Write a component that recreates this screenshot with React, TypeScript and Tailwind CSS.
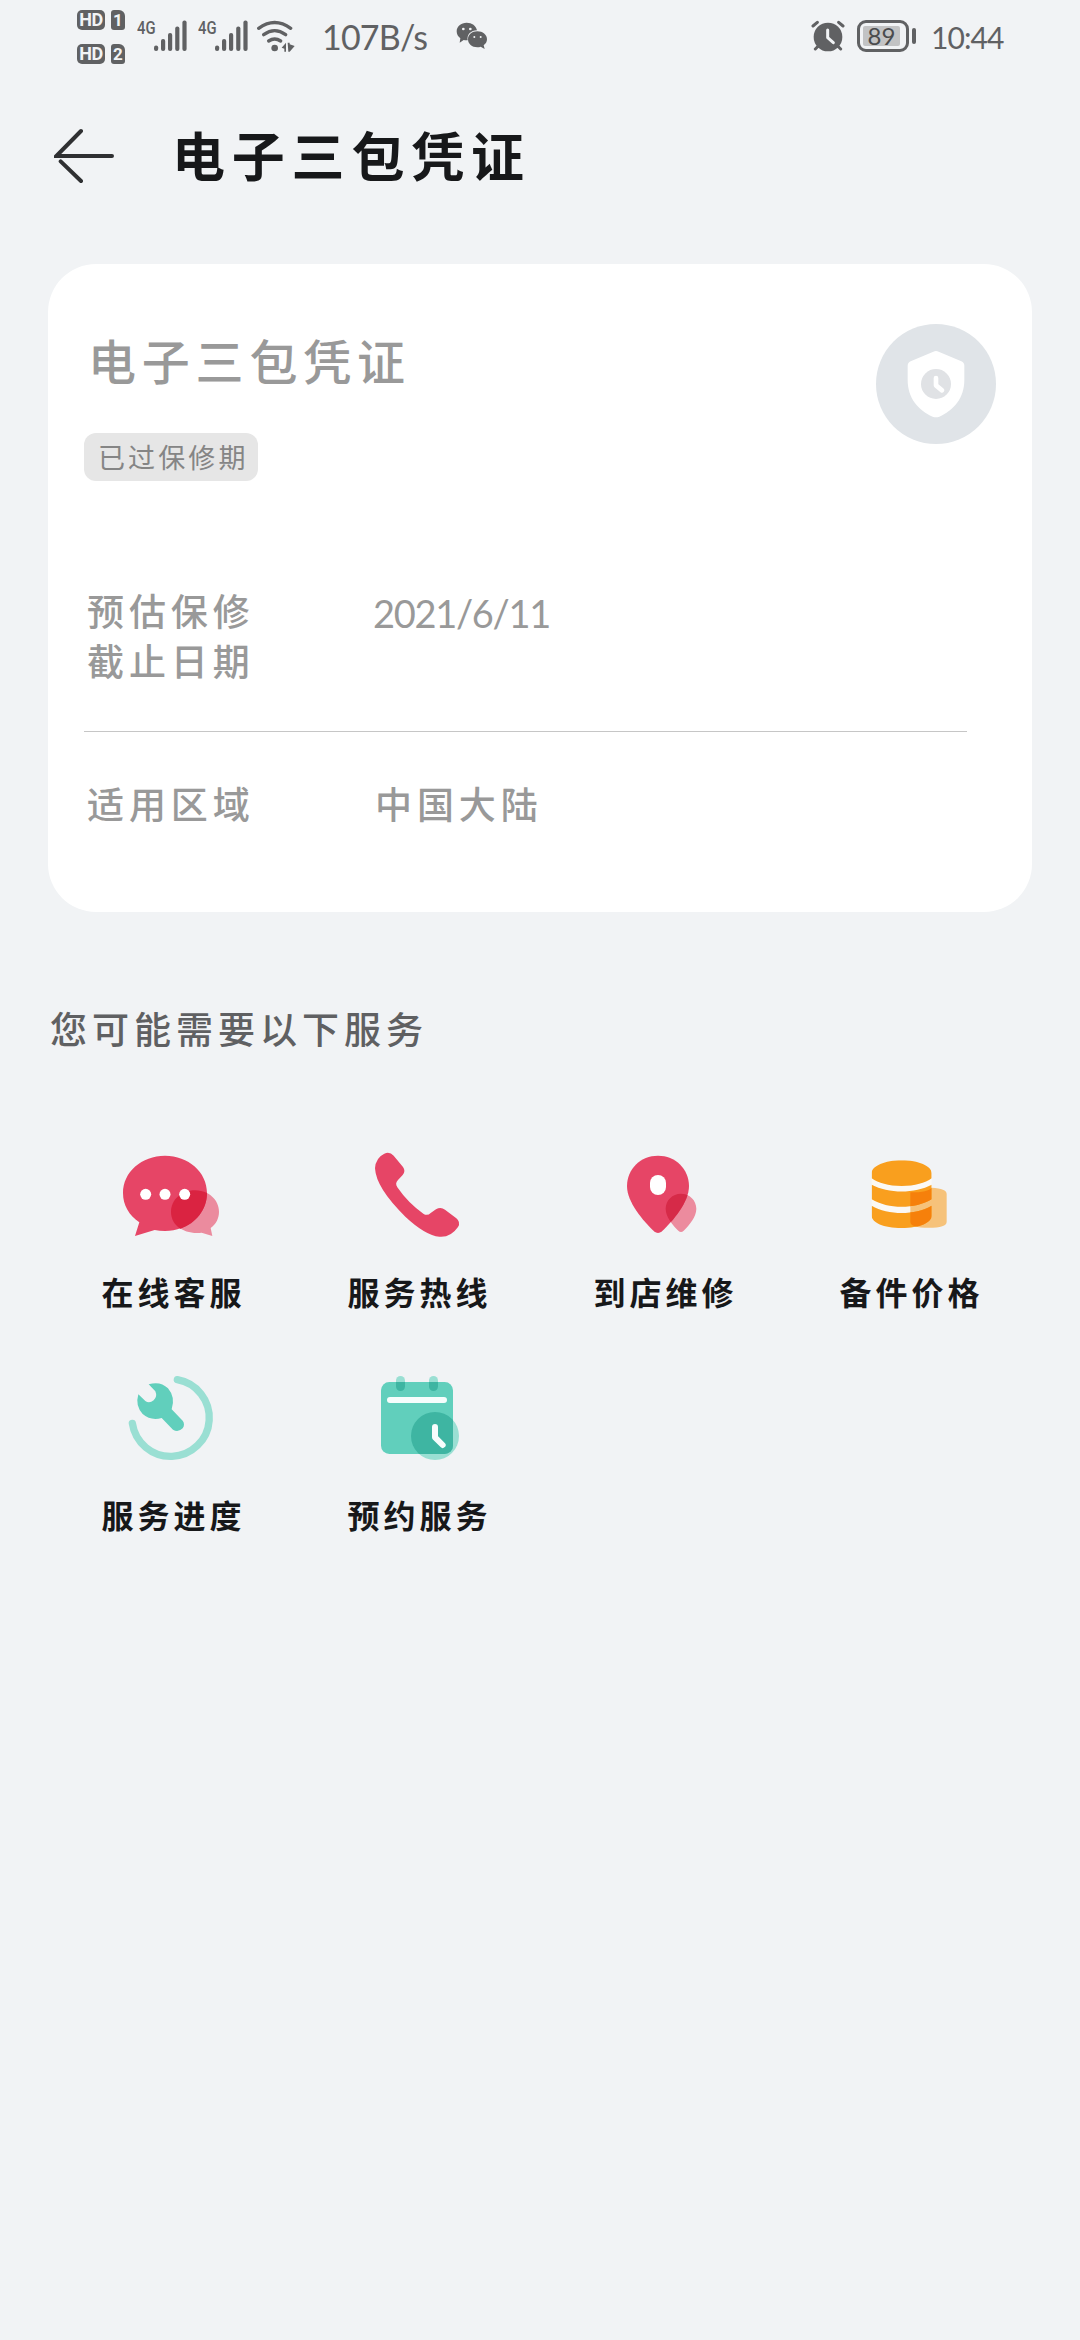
import type { ReactNode } from "react";

function SimBadge({ slot }: { slot: string }) {
  return (
    <div className="flex gap-1.5 text-[#f1f3f5] font-bold leading-none">
      <span className="flex h-5 w-7 items-center justify-center rounded-[5px] bg-[#606163] font-['Roboto',sans-serif] text-[18px] tracking-[-0.5px]">
        HD
      </span>
      <span className="flex h-5 w-3.5 items-center justify-center rounded-[3px] rounded-tr-[6px] bg-[#606163] font-['Roboto',sans-serif] text-[17px]">
        {slot}
      </span>
    </div>
  );
}

function Signal() {
  return (
    <div className="flex h-8 items-start">
      <span className="w-[17px] origin-left scale-x-[0.78] font-['Roboto',sans-serif] text-[19px] leading-4 font-medium">
        4G
      </span>
      <svg width="33" height="32" viewBox="0 0 33 32" fill="currentColor">
        <rect x="0" y="25.5" width="4.2" height="5.5" rx="2" />
        <rect x="7" y="19" width="4.2" height="12" rx="2" />
        <rect x="14" y="13" width="4.2" height="18" rx="2" />
        <rect x="21.2" y="6.5" width="4.2" height="24.5" rx="2" />
        <rect x="28.4" y="0.5" width="4.2" height="30.5" rx="2" />
      </svg>
    </div>
  );
}

function WifiIcon() {
  return (
    <svg width="38" height="32" viewBox="592 60 114 96" fill="none">
      <g stroke="currentColor" strokeWidth="10" strokeLinecap="round">
        <path d="M597 85Q645 50 693 85" />
        <path d="M612 104Q645 80 678 104" />
        <path d="M627 123Q645 111 663 123" />
      </g>
      <circle cx="645" cy="144" r="10" fill="currentColor" />
      <path d="M666 143L679 128V155H674V146ZM684 128L690 128V133L705 138L690 155H686Z" fill="currentColor" />
    </svg>
  );
}

function WechatIcon() {
  return (
    <svg width="32" height="28" viewBox="1186 67 96 84" fill="currentColor">
      <path d="M1218 69c-17 0-30 11-30 26 0 9 4 16 11 21l-2 13 12-8c3 1 6 1 9 1h3c-3-17 10-30 28-30-3-14-15-23-31-23z" />
      <path d="M1250 95c-16 0-28 10-28 24s12 24 28 24c4 0 7-1 10-2l12 7-3-11c6-4 10-11 10-18 0-14-13-24-29-24z" />
      <g fill="#f1f3f5">
        <circle cx="1208" cy="88" r="4" />
        <circle cx="1229" cy="88" r="4" />
        <circle cx="1241" cy="112" r="3" />
        <circle cx="1260" cy="112" r="3" />
      </g>
    </svg>
  );
}

function AlarmIcon() {
  return (
    <svg width="34" height="32" viewBox="90 60 102 96" fill="none">
      <g stroke="currentColor" strokeWidth="9" strokeLinecap="round">
        <path d="M96 78L109 67M186 78L173 67M112 138L103 147M170 138L179 147" />
      </g>
      <circle cx="141" cy="111" r="43" fill="currentColor" />
      <path d="M140 90V113L157 128" stroke="#f1f3f5" strokeWidth="9" strokeLinecap="round" strokeLinejoin="round" />
    </svg>
  );
}

function StatusBar() {
  return (
    <div className="flex h-[72px] items-start justify-between pr-[77px] pl-[77px] text-[#606163]">
      <div className="flex">
        <div className="flex w-[60px] flex-col gap-3.5 pt-2.5">
          <SimBadge slot="1" />
          <SimBadge slot="2" />
        </div>
        <div className="flex gap-[11px] pt-5">
          <Signal />
          <Signal />
        </div>
        <div className="pt-5 pl-[9px]">
          <WifiIcon />
        </div>
        <span className="w-[161px] pt-[21px] pl-[27px] font-['Lato',sans-serif] text-[34px] leading-8 tracking-[-0.8px] whitespace-nowrap">
          107B/s
        </span>
        <div className="pt-[22px]">
          <WechatIcon />
        </div>
      </div>
      <div className="flex pt-5">
        <AlarmIcon />
        <div className="ml-3 flex h-8 items-center">
          <div className="h-8 w-[52px] rounded-[9px] border-[3px] border-current p-[3px]">
            <div className="flex h-5 w-[37px] items-center justify-center rounded-[2px] bg-[#c2c3c4] font-['Lato',sans-serif] text-[24px] leading-none text-[#4a4b4d]">
              89
            </div>
          </div>
          <div className="ml-[3px] h-4 w-[4px] rounded-full bg-current" />
        </div>
        <span className="w-[87px] pl-[15px] font-['Lato',sans-serif] text-[30px] leading-[34px] tracking-[-0.9px] whitespace-nowrap">
          10:44
        </span>
      </div>
    </div>
  );
}

function Header() {
  return (
    <header className="flex h-[168px] items-center pl-[54px]">
      <svg width="60" height="56" viewBox="72 84 180 168" fill="none" stroke="#2f3032" strokeWidth="12" strokeLinecap="round">
        <path d="M246 168H79L153 93M92 184L153 243" />
      </svg>
      <h1 className="-mt-1 ml-[58px] text-[53px] leading-none font-bold tracking-[6.8px] text-[#17181a]">电子三包凭证</h1>
    </header>
  );
}

function ShieldIcon() {
  return (
    <svg width="120" height="120" viewBox="108 101 360 360">
      <circle cx="288" cy="281" r="180" fill="#e0e4e8" />
      <path
        d="M280 184q8-4 16 0l68 29q9 4 9 13v42c0 56-32 91-75 111q-10 4-20 0c-43-20-75-55-75-111v-42q0-9 9-13z"
        fill="#fff"
      />
      <circle cx="288" cy="281" r="45" fill="#e0e2e5" />
      <path d="M288 263V285L306 300" fill="none" stroke="#fff" strokeWidth="14" strokeLinecap="round" strokeLinejoin="round" />
    </svg>
  );
}

function WarrantyCard() {
  return (
    <section className="mx-12 mt-6 h-[648px] rounded-[48px] bg-white pr-9 pl-9 text-[#999]">
      <div className="flex justify-between">
        <div className="pt-[69px]">
          <h2 className="pl-[4px] text-[48px] leading-[52px] font-medium tracking-[5.8px]">电子三包凭证</h2>
          <div className="mt-12 flex h-12 w-[174px] items-center rounded-xl bg-[#e6e6e6] pl-[14px] text-[27px] leading-[46px] tracking-[3.1px] whitespace-nowrap text-[#858585]">
            已过保修期
          </div>
        </div>
        <div className="pt-[60px]">
          <ShieldIcon />
        </div>
      </div>
      <dl>
        <div className="mr-[29px] flex h-[251px] border-b-[1.5px] border-[#c6c6c6] pt-[104px] text-[37px] leading-[50px] font-medium">
          <dt className="w-[288px] pl-[3px] tracking-[4.9px]">
            预估保修
            <br />
            截止日期
          </dt>
          <dd className="pt-[3px] pl-px font-['Lato',sans-serif] text-[38px] font-normal tracking-[-1.3px]">2021/6/11</dd>
        </div>
        <div className="flex pt-[46px] text-[37px] leading-[50px] font-medium tracking-[4.9px]">
          <dt className="w-[288px] pl-[3px]">适用区域</dt>
          <dd className="pl-[3px]">中国大陆</dd>
        </div>
      </dl>
    </section>
  );
}

function ChatIcon() {
  return (
    <svg width="108" height="108" viewBox="111 36 324 324">
      <path d="M345 181c40 0 72 28 72 64 0 20-9 37-25 49l5 24-32-10c-52 6-92-22-92-63 0-36 32-64 72-64z" fill="#eb8b9e" />
      <path d="M255 77c70 0 126 49 126 112 0 64-56 114-126 114-11 0-21-1-31-3l-59 18 13-41c-31-21-49-52-49-88 0-63 56-112 126-112z" fill="#e64566" />
      <path d="M345 181c12 0 24 3 36 8 0 49-33 91-80 107-17-11-28-29-28-51 0-36 32-64 72-64z" fill="#da2341" />
      <g fill="#fff">
        <circle cx="197" cy="193" r="16.5" />
        <circle cx="255" cy="193" r="16.5" />
        <circle cx="314" cy="193" r="16.5" />
      </g>
    </svg>
  );
}

function PhoneIcon() {
  return (
    <svg width="108" height="108" viewBox="849 36 324 324">
      <path
        d="M913 71Q929 64 941 77L969 111Q978 124 968 135L954 150Q944 160 952 172Q984 219 1030 251Q1042 259 1052 249L1068 238Q1082 229 1095 239L1129 265Q1143 277 1134 291Q1112 323 1078 320Q1036 316 976 260Q888 174 885 115Q887 83 913 71Z"
        fill="#e64566"
      />
    </svg>
  );
}

function PinIcon() {
  return (
    <svg width="108" height="108" viewBox="87 36 324 324">
      <defs>
        <clipPath id="pin">
          <path d="M234 77c52 0 93 40 93 91 0 49-48 104-81 136q-12 10-24 0c-33-32-81-87-81-136 0-51 41-91 93-91z" />
        </clipPath>
      </defs>
      <path d="M303 191c26 0 46 20 46 45 0 24-20 48-38 66q-8 8-16 0c-18-18-38-42-38-66 0-25 20-45 46-45z" fill="#ec8b9e" />
      <path d="M234 77c52 0 93 40 93 91 0 49-48 104-81 136q-12 10-24 0c-33-32-81-87-81-136 0-51 41-91 93-91z" fill="#e64566" />
      <path
        d="M303 191c26 0 46 20 46 45 0 24-20 48-38 66q-8 8-16 0c-18-18-38-42-38-66 0-25 20-45 46-45z"
        fill="#d62a48"
        clipPath="url(#pin)"
      />
      <rect x="210" y="135" width="48" height="60" rx="24" fill="#fff" />
    </svg>
  );
}

function CoinsIcon() {
  return (
    <svg width="108" height="108" viewBox="825 36 324 324">
      <defs>
        <clipPath id="coins">
          <path d="M875 130c0-22 40-39 90-39s90 17 90 39v15c-20 14-50 23-90 23s-70-9-90-23zM875 164c50 27 130 27 180 0v44c-50 30-130 30-180 0zM875 227c50 29 130 29 180 0v30c0 20-35 37-90 37s-90-17-90-37z" />
        </clipPath>
      </defs>
      <path d="M875 143c50 34 130 34 180 0v23c-50 26-130 26-180 0zM875 206c50 34 130 34 180 0v23c-50 26-130 26-180 0z" fill="#fbf9f5" />
      <path d="M991 187q54 0 64-14 45 2 45 19v83q0 18-54 18-55 0-55-18z" fill="#f6c27a" />
      <g clipPath="url(#coins)">
        <rect x="870" y="85" width="190" height="214" fill="#f99f1e" />
        <path d="M991 187q54 0 64-14 45 2 45 19v83q0 18-54 18-55 0-55-18z" fill="#f6800b" />
      </g>
    </svg>
  );
}

function ProgressIcon() {
  return (
    <svg width="108" height="108" viewBox="111 45 324 324">
      <path d="M292 89A116 116 0 1 1 157 220" fill="none" stroke="#9adfd3" strokeWidth="22" strokeLinecap="round" />
      <path
        d="M206 103Q241 92 264 115Q287 142 275 178L308 212Q316 223 308 235Q294 249 279 239L245 204Q212 213 188 192Q165 167 175 133L196 153Q208 161 221 151Q233 140 226 124Z"
        fill="#61cfbc"
      />
    </svg>
  );
}

function CalendarIcon() {
  return (
    <svg width="108" height="108" viewBox="849 45 324 324">
      <defs>
        <clipPath id="calendar">
          <rect x="903" y="96" width="216" height="216" rx="25" />
        </clipPath>
      </defs>
      <g fill="#9adfd3">
        <rect x="948" y="78" width="27" height="45" rx="13.5" />
        <rect x="1047" y="78" width="27" height="45" rx="13.5" />
        <circle cx="1065" cy="258" r="72" />
      </g>
      <g clipPath="url(#calendar)">
        <rect x="903" y="96" width="216" height="216" fill="#61cfbc" />
        <g fill="#3eb5a2">
          <rect x="948" y="78" width="27" height="45" rx="13.5" />
          <rect x="1047" y="78" width="27" height="45" rx="13.5" />
          <circle cx="1065" cy="258" r="72" />
        </g>
      </g>
      <g fill="none" stroke="#f6fdfc" strokeWidth="18" strokeLinecap="round" strokeLinejoin="round">
        <path d="M930 150H1092M1065 231V262L1088 285" />
      </g>
    </svg>
  );
}

const services: { label: string; icon: ReactNode }[] = [
  { label: "在线客服", icon: <ChatIcon /> },
  { label: "服务热线", icon: <PhoneIcon /> },
  { label: "到店维修", icon: <PinIcon /> },
  { label: "备件价格", icon: <CoinsIcon /> },
  { label: "服务进度", icon: <ProgressIcon /> },
  { label: "预约服务", icon: <CalendarIcon /> },
];

export default function App() {
  return (
    <div className="h-[2340px] w-[1080px] overflow-hidden bg-[#f1f3f5] font-['Noto_Sans_CJK_SC',sans-serif]">
      <StatusBar />
      <Header />
      <WarrantyCard />
      <h3 className="mt-[91px] pl-[50px] text-[37px] leading-[50px] font-medium tracking-[5px] text-[#5f6062]">
        您可能需要以下服务
      </h3>
      <div className="mx-12 mt-[89px] grid auto-rows-[223px] grid-cols-4">
        {services.map(({ label, icon }) => (
          <div key={label} className="flex flex-col items-center">
            {icon}
            <span className="mt-[21px] pl-[5px] text-[32px] leading-[40px] font-bold tracking-[4px] text-[#17181a]">
              {label}
            </span>
          </div>
        ))}
      </div>
    </div>
  );
}
